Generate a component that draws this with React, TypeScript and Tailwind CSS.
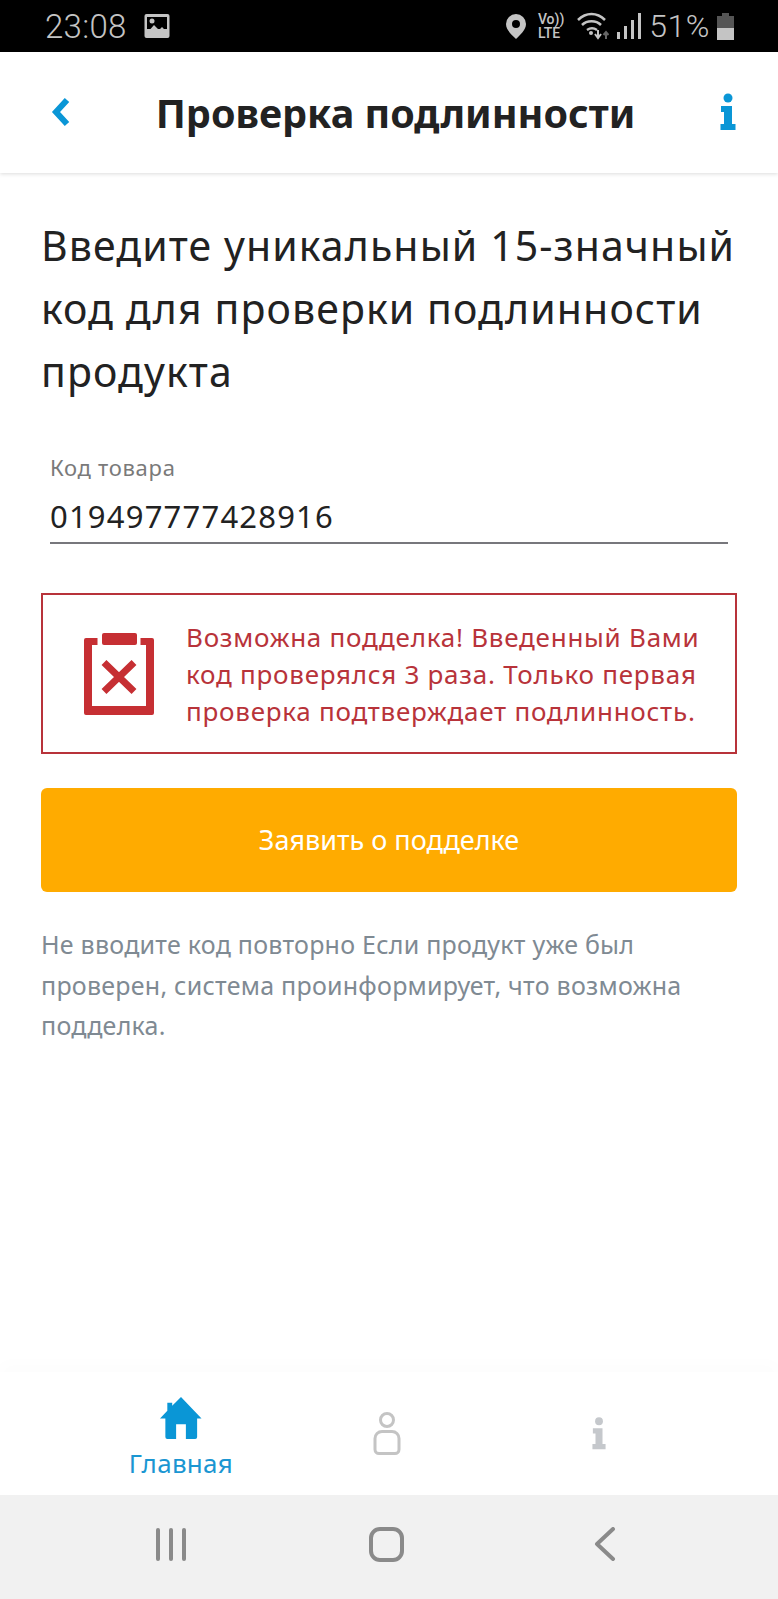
const font = { fontFamily: '"Noto Sans", sans-serif' };

function StatusBar() {
  return (
    <div className="flex h-[52px] shrink-0 items-center justify-between bg-black pl-[45px] pr-[44px] text-[#c4c4c4] font-['Roboto',sans-serif]">
      <div className="flex items-center gap-[17px]">
        <span className="text-[33px] font-light leading-none tracking-[0.3px]">23:08</span>
        <svg width="26" height="26" viewBox="0 0 26 26" fill="none">
          <rect x="0.5" y="1" width="25" height="24" rx="2" fill="#c4c4c4" />
          <rect x="3" y="4" width="20" height="12" fill="#000" />
          <circle cx="8" cy="8" r="2.5" fill="#c4c4c4" />
          <path d="M3 20l7-8 5 5 3-3 5 5v3H3z" fill="#c4c4c4" />
        </svg>
      </div>
      <div className="flex items-center">
        <svg width="22" height="26" viewBox="0 0 22 26" className="mr-[11px]">
          <path fillRule="evenodd" d="M11 1a10 10 0 0 1 10 10c0 6-6 11-10 15C7 22 1 17 1 11A10 10 0 0 1 11 1zm0 6a4 4 0 1 0 0 8 4 4 0 0 0 0-8z" fill="#c4c4c4" />
        </svg>
        <div className="mr-[13px] flex flex-col items-start text-[14px] font-medium leading-[14px]">
          <span>Vo))</span>
          <span>LTE</span>
        </div>
        <svg width="32" height="28" viewBox="0 0 32 28" fill="none" className="mr-[8px]">
          <path d="M1 8c8-8 19-8 27 0M5 13c5-5 14-5 19 0M10 18c3-2 7-2 10 0" stroke="#c4c4c4" strokeWidth="2.5" />
          <circle cx="14" cy="21" r="2" fill="#c4c4c4" />
          <path d="M21 18v7m-3-3l3 4 3-4" stroke="#c4c4c4" strokeWidth="2" />
          <path d="M29 27v-7m-2.500 3l2.500-3 2.500 3" stroke="#666" strokeWidth="2" />
        </svg>
        <div className="mr-[8px] flex items-end gap-[4px]">
          <div className="h-[7px] w-[3px] bg-[#c4c4c4]" />
          <div className="h-[13px] w-[3px] bg-[#c4c4c4]" />
          <div className="h-[19px] w-[3px] bg-[#c4c4c4]" />
          <div className="h-[26px] w-[3px] bg-[#c4c4c4]" />
        </div>
        <span className="mr-[7px] text-[32px] font-light leading-none tracking-[0.5px]">51%</span>
        <svg width="17" height="27" viewBox="0 0 17 27">
          <rect x="5" y="0" width="7" height="3" fill="#555" />
          <rect x="0" y="3" width="17" height="12" fill="#555" />
          <rect x="0" y="15" width="17" height="12" fill="#c4c4c4" />
        </svg>
      </div>
    </div>
  );
}

function Header() {
  return (
    <div className="flex h-[121px] shrink-0 items-center justify-between bg-white pl-[51px] pr-[42px] shadow-[0_1px_4px_rgba(0,0,0,0.14)]">
      <svg width="20" height="30" viewBox="0 0 20 30" className="-mt-[2px]">
        <path d="M16 3L5 15l11 12" fill="none" stroke="#0a96d6" strokeWidth="6" />
      </svg>
      <h1 className="pt-[3px] text-[39.5px] font-bold leading-none text-[#222]">Проверка подлинности</h1>
      <InfoIcon color="#0a96d6" className="-mt-[2px]" width={16} height={38} />
    </div>
  );
}

function InfoIcon({ color, className, width, height }: { color: string; className?: string; width: number; height: number }) {
  return (
    <svg width={width} height={height} viewBox="0 0 16 38" className={className}>
      <circle cx="8" cy="5" r="4.500" fill={color} />
      <path d="M1 13h11v18h3.500v6H.5v-6H4V19H1z" fill={color} />
    </svg>
  );
}

export default function App() {
  return (
    <div className="flex h-[1599px] w-[778px] flex-col overflow-hidden bg-white" style={font}>
      <StatusBar />
      <Header />
      <main className="flex-1 px-[41px] pt-[41px]">
        <h2 className="whitespace-nowrap text-[41px] leading-[63px] tracking-[1.1px] text-[#222]">
          Введите уникальный 15-значный
          <br />
          код для проверки подлинности
          <br />
          продукта
        </h2>
        <div className="mx-[9px] mt-[49px] border-b-2 border-[#77777c] pb-[4px]">
          <div className="text-[22px] leading-[30px] tracking-[0.7px] text-[#7a7a7a]">Код товара</div>
          <div className="mt-[12px] text-[31px] leading-[44px] tracking-[1.2px] text-[#222]">019497777428916</div>
        </div>
        <div className="mt-[49px] flex h-[161px] items-center border-2 border-[#b8333a] pl-[41px]">
          <svg width="70" height="82" viewBox="0 0 70 82" className="shrink-0">
            <path d="M20 0h31a2 2 0 0 1 2 2v8a2 2 0 0 1-2 2H20a2 2 0 0 1-2-2V2a2 2 0 0 1 2-2z" fill="#c62f33" />
            <path d="M0 7a2 2 0 0 1 2-2h11.500v7H8v61h54V12h-5.500V5H68a2 2 0 0 1 2 2v73a2 2 0 0 1-2 2H2a2 2 0 0 1-2-2z" fill="#c62f33" />
            <path d="M20 29.500l30 29M50 29.500l-30 29" stroke="#c62f33" strokeWidth="7" />
          </svg>
          <p className="ml-[32px] w-[535px] pt-[2px] text-[26px] leading-[37.300px] tracking-[0.75px] text-[#b8333a]">
            Возможна подделка! Введенный Вами код проверялся 3 раза. Только первая проверка подтверждает подлинность.
          </p>
        </div>
        <button className="mt-[34px] flex h-[104px] w-full items-center justify-center rounded-[6px] bg-[#ffab00] text-[27px] text-white">
          Заявить о подделке
        </button>
        <p className="mt-[32px] text-[25px] leading-[40.500px] tracking-[0.25px] text-[#7f8a93]">
          Не вводите код повторно Если продукт уже был проверен, система проинформирует, что возможна подделка.
        </p>
      </main>
      <nav className="grid h-[123px] shrink-0 grid-cols-3 bg-white px-[77px] pt-[24px] shadow-[0_-10px_14px_rgba(0,0,0,0.012)]">
        <div className="flex flex-col items-center">
          <svg width="44" height="43" viewBox="0 0 44 44">
            <path d="M22 1l21 22h-4.500v19a2 2 0 0 1-2 2H27V29H17v15H8a2 2 0 0 1-2-2V23H.500L8 15V7h5v3z" fill="#0a96d6" />
          </svg>
          <span className="mt-[6px] text-[26px] leading-[36px] tracking-[0.3px] text-[#1a96d2]">Главная</span>
        </div>
        <div className="flex justify-center pr-[4px] pt-[16px]">
          <svg width="28" height="43" viewBox="0 0 28 43" fill="none" stroke="#c4c4c4" strokeWidth="3">
            <circle cx="14" cy="8" r="6.500" />
            <path d="M9 19.500h10a7 7 0 0 1 7 7v11a4 4 0 0 1-4 4H6a4 4 0 0 1-4-4v-11a7 7 0 0 1 7-7z" />
          </svg>
        </div>
        <div className="flex justify-center pl-[4px] pt-[20px]">
          <InfoIcon color="#c5c8cc" width={14} height={35} />
        </div>
      </nav>
      <div className="grid h-[104px] shrink-0 grid-cols-3 items-center bg-[#f1f1f1] px-[62px] pb-[6px]">
        <div className="flex justify-center gap-[9px]">
          <div className="h-[33px] w-[4px] rounded-full bg-[#8a8a8a]" />
          <div className="h-[33px] w-[4px] rounded-full bg-[#8a8a8a]" />
          <div className="h-[33px] w-[4px] rounded-full bg-[#8a8a8a]" />
        </div>
        <div className="flex justify-center pr-[5px]">
          <div className="size-[35px] rounded-[11px] border-[4px] border-[#8a8a8a]" />
        </div>
        <div className="flex justify-center pr-[4px]">
          <svg width="22" height="34" viewBox="0 0 22 34" fill="none">
            <path d="M19 2L3 17l16 15" stroke="#8a8a8a" strokeWidth="4" strokeLinecap="round" strokeLinejoin="round" />
          </svg>
        </div>
      </div>
    </div>
  );
}
